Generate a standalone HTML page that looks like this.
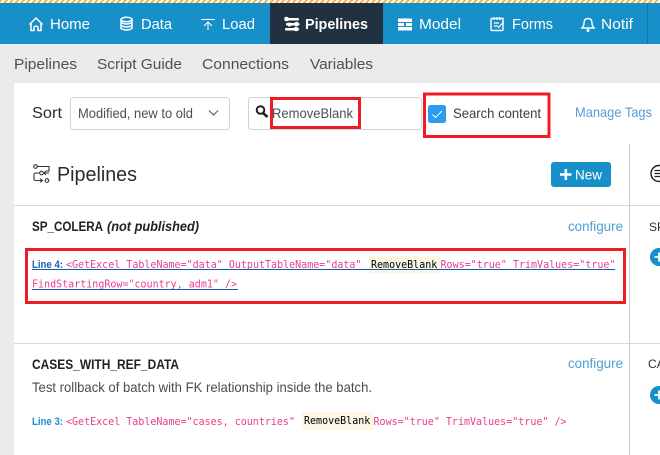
<!DOCTYPE html>
<html><head><meta charset="utf-8"><style>
html,body{margin:0;padding:0;width:660px;height:455px;overflow:hidden;background:#fff}
svg{display:block}
text{font-family:"Liberation Sans",sans-serif;white-space:pre}
.m{font-family:"DejaVu Sans Mono","Liberation Mono",monospace;font-size:11px;fill:#e83e8c}
.h{font-family:"DejaVu Sans Mono","Liberation Mono",monospace;font-size:11px;fill:#000}
.n{font-size:15px;fill:#fff}
.s{font-size:15px;fill:#4f4f5b}
.c{font-size:14px;fill:#4b9fd5}
</style></head><body>
<svg width="660" height="455" viewBox="0 0 660 455" xmlns="http://www.w3.org/2000/svg">
<defs><pattern id="hatch" width="4" height="4" patternUnits="userSpaceOnUse" patternTransform="rotate(45)"><rect width="4" height="4" fill="#fff"/><rect width="2" height="4" fill="#f2b23e"/></pattern></defs>
<rect width="660" height="455" fill="#fff"/>
<rect width="660" height="3" fill="url(#hatch)"/>
<rect y="3" width="660" height="41" fill="#178fc9"/>
<rect x="270" y="3" width="113" height="41" fill="#22313f"/>
<rect x="647" y="3" width="1" height="41" fill="#1274a5"/>
<rect y="44" width="660" height="39" fill="#ebebeb"/>
<rect x="0" y="83" width="14" height="372" fill="#ebebeb"/>

<!-- nav icons -->
<g fill="none" stroke="#fff" stroke-width="1.500">
<path d="M29.500 24.500L36 18L42.500 24.500M31 23V30.500H34V27Q36 25 38 27V30.500H41V23"/>
<ellipse cx="126.500" cy="19.500" rx="5.500" ry="2.200"/>
<path d="M121 19.500V28.500Q126.500 31.500 132 28.500V19.500M121 22.500Q126.500 25.500 132 22.500M121 25.500Q126.500 28.500 132 25.500"/>
<path d="M201 19.500H215M208 30V22.500M204 26L208 22L212 26" stroke-width="1"/>
</g>
<g fill="#fff">
<rect x="285" y="18" width="14" height="2.500" rx="1"/><circle cx="286.500" cy="19" r="2.300"/>
<rect x="286" y="23" width="13.500" height="2.500" rx="1"/><circle cx="296.500" cy="24" r="2.300"/><circle cx="289.500" cy="24.500" r="2"/>
<rect x="285" y="28" width="14" height="2.500" rx="1"/><circle cx="296" cy="29" r="2.300"/>
<path d="M398 18.500H412V22H398ZM398 23H404V26H398ZM406 23H412V26H406ZM398 27H412V30.500H398Z"/>
</g>
<g fill="none" stroke="#fff" stroke-width="1.400">
<path d="M492 18.500H503V29.500Q503 30.500 502 30.500H492Q491 30.500 491 29.500V19.500Q491 18.500 492 18.500Z"/>
<path d="M494 17V20M497 17V20M500 17V20M494 23H499M494 26H498M498 28L504 21.500" stroke-width="1.200"/>
<path d="M588 28H582Q584 26 584 23Q584 18.500 588 18.500H588Q592 18.500 592 23Q592 26 594 28Z"/>
</g>
<circle cx="588" cy="30.500" r="1.500" fill="#fff"/>

<text class="n" x="50" y="29" textLength="40" lengthAdjust="spacingAndGlyphs">Home</text>
<text class="n" x="141" y="29" textLength="31" lengthAdjust="spacingAndGlyphs">Data</text>
<text class="n" x="222" y="29" textLength="33" lengthAdjust="spacingAndGlyphs">Load</text>
<text class="n" x="305" y="29" textLength="63" lengthAdjust="spacingAndGlyphs" font-weight="700">Pipelines</text>
<text class="n" x="419" y="29" textLength="42" lengthAdjust="spacingAndGlyphs">Model</text>
<text class="n" x="512" y="29" textLength="41" lengthAdjust="spacingAndGlyphs">Forms</text>
<text class="n" x="601" y="29" textLength="32" lengthAdjust="spacingAndGlyphs">Notif</text>

<text class="s" x="14" y="69" textLength="63" lengthAdjust="spacingAndGlyphs">Pipelines</text>
<text class="s" x="97" y="69" textLength="85" lengthAdjust="spacingAndGlyphs">Script Guide</text>
<text class="s" x="202" y="69" textLength="87" lengthAdjust="spacingAndGlyphs">Connections</text>
<text class="s" x="310" y="69" textLength="63" lengthAdjust="spacingAndGlyphs">Variables</text>

<!-- toolbar -->
<text x="32" y="118" font-size="16" fill="#2b2b33" textLength="30" lengthAdjust="spacingAndGlyphs">Sort</text>
<rect x="70.500" y="97.500" width="159" height="32" rx="3" fill="#fff" stroke="#ced4da"/>
<text x="78" y="118" font-size="14" fill="#495057" textLength="115" lengthAdjust="spacingAndGlyphs">Modified, new to old</text>
<path d="M209 110.500L213.500 115L218 110.500" fill="none" stroke="#5a6066" stroke-width="1.200"/>
<rect x="248.500" y="97.500" width="173" height="32" rx="3" fill="#fff" stroke="#ced4da"/>
<circle cx="260.500" cy="110" r="3.800" fill="none" stroke="#222" stroke-width="2"/>
<path d="M263 113L267.500 117" stroke="#222" stroke-width="2.600"/>
<text x="272" y="118" font-size="14" fill="#495057" textLength="81" lengthAdjust="spacingAndGlyphs">RemoveBlank</text>
<rect x="271.500" y="98.500" width="88" height="29" fill="none" stroke="#ee1c25" stroke-width="3"/>
<rect x="428" y="105" width="18" height="18" rx="2.500" fill="#2b9bf0"/>
<path d="M432.500 114.500L435.500 117.500L442 111" fill="none" stroke="#fff" stroke-width="1"/>
<text x="453" y="118" font-size="14" fill="#3c3c46" textLength="88" lengthAdjust="spacingAndGlyphs">Search content</text>
<rect x="424.500" y="94" width="124.500" height="42.500" fill="none" stroke="#ee1c25" stroke-width="3"/>
<text x="575" y="117" font-size="14" fill="#5b9bd5" textLength="77" lengthAdjust="spacingAndGlyphs">Manage Tags</text>

<!-- heading -->
<g fill="none" stroke="#333" stroke-width="1.100">
<circle cx="35.500" cy="166.500" r="1.800"/><path d="M37.500 166.500H49V171H46"/>
<circle cx="41.500" cy="173" r="1.800"/><path d="M39.500 173H36Q34 173 34 175V179Q34 180.500 36 180.500H42M40 178.500L42.500 180.500L40 182.500"/>
<circle cx="47" cy="180.500" r="1.800"/><path d="M44 173H49M46 171L44 173L46 175"/>
</g>
<text x="57" y="181" font-size="20" fill="#2b2b33" textLength="80" lengthAdjust="spacingAndGlyphs">Pipelines</text>
<rect x="551" y="162" width="60" height="25" rx="3" fill="#178fc9"/>
<path d="M560 174.500H571.500M565.800 169V180" stroke="#fff" stroke-width="2.600"/>
<text x="575" y="179.500" font-size="14" fill="#fff" textLength="27" lengthAdjust="spacingAndGlyphs">New</text>

<rect x="629" y="144" width="1" height="311" fill="#cfcfcf"/>
<circle cx="659" cy="173.500" r="8" fill="none" stroke="#222" stroke-width="1.400"/>
<path d="M654.500 170.500H660M654.500 173.500H660M654.500 176.500H660" stroke="#222" stroke-width="1.200"/>

<rect x="14" y="205" width="646" height="1" fill="#d8d8d8"/>
<rect x="14" y="343" width="646" height="1" fill="#d8d8d8"/>

<!-- card 1 -->
<text x="32" y="231" font-size="13.500" font-weight="700" fill="#222" textLength="71" lengthAdjust="spacingAndGlyphs">SP_COLERA</text>
<text x="107" y="231" font-size="13.500" font-weight="700" font-style="italic" fill="#222" textLength="92" lengthAdjust="spacingAndGlyphs">(not published)</text>
<text class="c" x="568" y="231" textLength="55" lengthAdjust="spacingAndGlyphs">configure</text>
<rect x="369" y="256" width="71" height="17.500" fill="#fdf6e3"/>
<text x="32" y="268" font-size="11" font-weight="700" fill="#1a5fb4" textLength="31" lengthAdjust="spacingAndGlyphs">Line 4:</text>
<text class="m" x="66" y="268" textLength="295.500" lengthAdjust="spacingAndGlyphs">&lt;GetExcel TableName="data" OutputTableName="data"</text>
<text class="h" x="371" y="268" textLength="66.300" lengthAdjust="spacingAndGlyphs">RemoveBlank</text>
<text class="m" x="440.500" y="268" textLength="175" lengthAdjust="spacingAndGlyphs">Rows="true" TrimValues="true"</text>
<text class="m" x="32" y="287.500" textLength="205" lengthAdjust="spacingAndGlyphs">FindStartingRow="country, adm1" /&gt;</text>
<path d="M32 269.500H615M32 289.500H238" stroke="#0b5cad" stroke-width="1"/>
<rect x="26.500" y="249.500" width="598" height="53" fill="none" stroke="#ee1c25" stroke-width="3"/>
<text x="649" y="231" font-size="12" fill="#333">SP</text>
<circle cx="659" cy="257" r="9" fill="#178fc9"/>
<path d="M654.500 257H663.500M659 252.500V261.500" stroke="#fff" stroke-width="1.800"/>

<!-- card 2 -->
<text x="32" y="369" font-size="13.500" font-weight="700" fill="#222" textLength="147" lengthAdjust="spacingAndGlyphs">CASES_WITH_REF_DATA</text>
<text class="c" x="568" y="368" textLength="55" lengthAdjust="spacingAndGlyphs">configure</text>
<text x="32" y="392" font-size="14" fill="#4a4a55" textLength="340" lengthAdjust="spacingAndGlyphs">Test rollback of batch with FK relationship inside the batch.</text>
<rect x="302" y="412" width="71" height="18" fill="#fdf6e3"/>
<text x="32" y="425" font-size="11" font-weight="700" fill="#1a8fc9" textLength="31" lengthAdjust="spacingAndGlyphs">Line 3:</text>
<text class="m" x="66" y="425" textLength="229" lengthAdjust="spacingAndGlyphs">&lt;GetExcel TableName="cases, countries"</text>
<text class="h" x="304" y="424" textLength="66.300" lengthAdjust="spacingAndGlyphs">RemoveBlank</text>
<text class="m" x="373.500" y="425" textLength="193" lengthAdjust="spacingAndGlyphs">Rows="true" TrimValues="true" /&gt;</text>
<text x="648" y="368" font-size="12" fill="#333">CA</text>
<circle cx="659" cy="395" r="9" fill="#178fc9"/>
<path d="M654.500 395H663.500M659 390.500V399.500" stroke="#fff" stroke-width="1.800"/>
</svg>
</body></html>
